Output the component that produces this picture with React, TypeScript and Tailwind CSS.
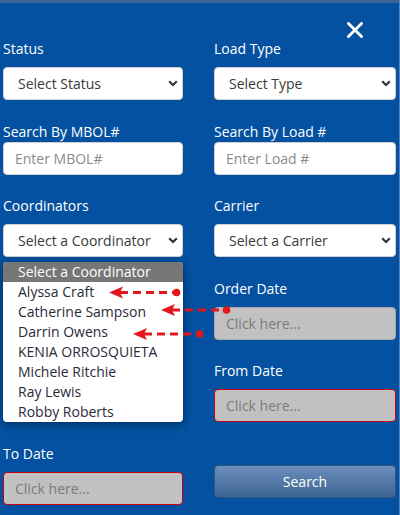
import React from 'react';

const coordinators = [
  'Alyssa Craft',
  'Catherine Sampson',
  'Darrin Owens',
  'KENIA ORROSQUIETA',
  'Michele Ritchie',
  'Ray Lewis',
  'Robby Roberts',
];

function Chevron() {
  return (
    <svg width="10" height="7" viewBox="0 0 10 7" className="shrink-0">
      <path d="M1.2 1.3 L5 5 L8.8 1.3" fill="none" stroke="#333" strokeWidth="2.2" />
    </svg>
  );
}

function FakeSelect({ text }: { text: string }) {
  return (
    <div className="mt-2 h-[33px] flex items-center justify-between pl-[14px] pr-[4px] bg-white border border-[#d0d0d0] rounded-[4px] text-[14px] text-[#3a3a3a]">
      <span>{text}</span>
      <Chevron />
    </div>
  );
}

function TextInput({ placeholder }: { placeholder: string }) {
  return (
    <input
      placeholder={placeholder}
      className="w-full h-[33px] px-[11px] bg-white border border-[#d0d0d0] rounded-[4px] text-[14px] text-[#333] placeholder:text-[#8a8a8a] outline-none"
    />
  );
}

function DateInput({ invalid }: { invalid?: boolean }) {
  return (
    <input
      placeholder="Click here..."
      className={
        invalid
          ? 'mt-2 w-full h-[33px] px-[11px] bg-[#c1c1c1] border border-[#c8000a] rounded-[4px] text-[14px] placeholder:text-[#7b7b7b] outline-none'
          : 'mt-2 w-full h-[33px] px-[11px] bg-[#c1c1c1] border border-[#a9a9a9] rounded-[4px] text-[14px] placeholder:text-[#7b7b7b] outline-none'
      }
    />
  );
}

function Label({ children }: { children: React.ReactNode }) {
  return <div className="h-5 leading-5 text-[14px] text-white">{children}</div>;
}

function Arrow({ y, tip, end }: { y: number; tip: number; end: number }) {
  return (
    <g>
      <line x1={tip + 11} y1={y} x2={end} y2={y} stroke="#e3161b" strokeWidth="3.2" strokeDasharray="8 5" />
      <path d={`M${tip} ${y} L${tip + 14} ${y - 6} L${tip + 11} ${y} L${tip + 14} ${y + 6} Z`} fill="#e3161b" />
      <circle cx={end} cy={y} r="3.8" fill="#e3161b" />
    </g>
  );
}

export default function App() {
  return (
    <div
      className="relative w-[400px] min-h-[515px] bg-[#0351a0] border-r border-[#5a82b5] overflow-hidden"
      style={{ fontFamily: '"Open Sans", "Noto Sans", sans-serif' }}
    >
      <div className="h-[3px] bg-[#3f6592]" />

      {/* Header with close */}
      <div className="h-[36px] flex justify-end items-start pt-[19px] pr-[36px]">
        <svg width="16" height="16" viewBox="0 0 16 16">
          <path d="M1.5 1.5 L14.5 14.5 M14.5 1.5 L1.5 14.5" stroke="#fff" strokeWidth="2.8" strokeLinecap="square" />
        </svg>
      </div>

      {/* Filter form */}
      <div className="grid grid-cols-[180px_182px] gap-x-[31px] gap-y-[21.5px] pl-[3px]">
        <div>
          <Label>Status</Label>
          <FakeSelect text="Select Status" />
        </div>
        <div>
          <Label>Load Type</Label>
          <FakeSelect text="Select Type" />
        </div>

        <div>
          <Label>Search By MBOL#</Label>
          <TextInput placeholder="Enter MBOL#" />
        </div>
        <div>
          <Label>Search By Load #</Label>
          <TextInput placeholder="Enter Load #" />
        </div>

        <div className="relative z-10">
          <Label>Coordinators</Label>
          <FakeSelect text="Select a Coordinator" />
          {/* Open dropdown list */}
          <div className="absolute left-0 top-[66px] w-[180px] bg-white rounded-[4px] overflow-hidden shadow-[0_2px_8px_rgba(0,0,0,0.45)] text-[14px]">
            <div className="h-5 leading-5 pl-[15px] bg-[#777777] text-white">Select a Coordinator</div>
            {coordinators.map((c) => (
              <div key={c} className="h-5 leading-5 pl-[15px] text-[#2a2a3a]">
                {c}
              </div>
            ))}
          </div>
        </div>
        <div>
          <Label>Carrier</Label>
          <FakeSelect text="Select a Carrier" />
        </div>

        <div />
        <div>
          <Label>Order Date</Label>
          <DateInput />
        </div>

        <div />
        <div>
          <Label>From Date</Label>
          <DateInput invalid />
        </div>

        <div>
          <Label>To Date</Label>
          <DateInput invalid />
        </div>
        <div>
          <button className="mt-[21px] w-full h-[33px] rounded-[4px] border border-[#2f5583] bg-gradient-to-b from-[#6c8fbd] to-[#3f6593] text-white text-[14px]">
            Search
          </button>
        </div>
      </div>

      {/* Annotation arrows */}
      <svg className="absolute inset-0 pointer-events-none z-20" width="400" height="515">
        <Arrow y={292.5} tip={109} end={176.5} />
        <Arrow y={310} tip={161} end={226.5} />
        <Arrow y={334} tip={133} end={199.5} />
      </svg>
    </div>
  );
}
